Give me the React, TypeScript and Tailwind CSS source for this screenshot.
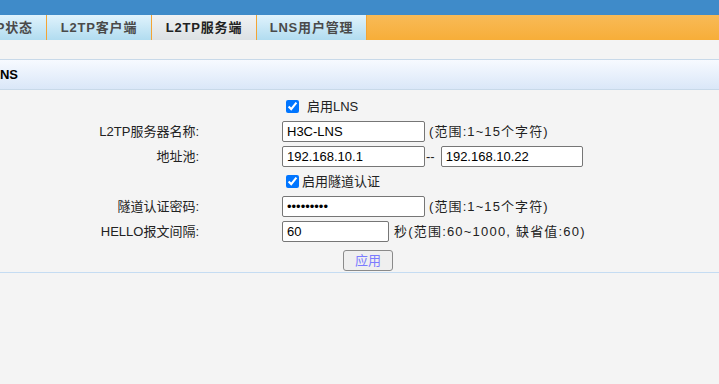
import React from 'react';

const font = { fontFamily: '"Liberation Sans", "Noto Sans CJK SC", sans-serif' };

const tabs = [
  { label: 'L2TP状态', cls: '-ml-[43px] w-[90px]' },
  { label: 'L2TP客户端', cls: 'w-[105px]' },
  { label: 'L2TP服务端', cls: 'w-[105px]', active: true },
  { label: 'LNS用户管理', cls: 'w-[110px]' },
];

const Field = ({ label, children }: { label?: string; children: React.ReactNode }) => (
  <div className="flex h-[25px] items-center">
    <div className="w-[199px] shrink-0 text-right text-[13px] text-[#222]">{label}</div>
    <div className="ml-[83px] flex items-center text-[13px] text-[#222]">{children}</div>
  </div>
);

const inputCls =
  'h-[21px] rounded-[2px] border border-[#767676] bg-white pl-[4px] text-[13px] text-black outline-none';

export default function App() {
  return (
    <div className="h-[384px] w-[719px] overflow-hidden bg-[#f4f4f4]" style={font}>
      {/* top bar */}
      <div className="h-[15px] bg-[#3f8bc9]" />

      {/* tabs */}
      <div className="flex h-[25px] bg-gradient-to-b from-[#f8ba56] to-[#f7ae38]">
        {tabs.map((t) => (
          <div
            key={t.label}
            className={`flex shrink-0 items-center justify-center border-r border-[#f3a434] text-[13px] font-bold tracking-[0.8px] ${t.cls} ${
              t.active
                ? 'bg-gradient-to-b from-[#f1f2f3] to-[#dce1e4] text-[#222]'
                : 'bg-gradient-to-b from-[#e0f3fc] to-[#b1dcf0] text-[#4a4a4a]'
            }`}
          >
            {t.label}
          </div>
        ))}
      </div>

      <div className="h-[19px]" />

      {/* section header */}
      <div className="flex h-[31px] items-center border-y border-[#c8d9e9] bg-gradient-to-b from-[#f7faff] to-[#dae7f8]">
        <span className="-ml-[8px] text-[13px] font-bold text-black">LNS</span>
      </div>

      {/* form */}
      <div className="border-b border-[#c5dcf2] pt-[4px]">
        <Field>
          <input type="checkbox" defaultChecked className="my-0 ml-[4px] mr-[8px] h-[13px] w-[13px] accent-[#0075ff]" />
          <span>启用LNS</span>
        </Field>
        <Field label="L2TP服务器名称:">
          <input className={`${inputCls} w-[143px]`} defaultValue="H3C-LNS" />
          <span className="ml-[4px] tracking-[1.1px]">(范围:1~15个字符)</span>
        </Field>
        <Field label="地址池:">
          <input className={`${inputCls} w-[143px]`} defaultValue="192.168.10.1" />
          <span className="ml-[1px] mr-[6px]">--</span>
          <input className={`${inputCls} w-[142px]`} defaultValue="192.168.10.22" />
        </Field>
        <Field>
          <input type="checkbox" defaultChecked className="my-0 ml-[4px] mr-[3px] h-[13px] w-[13px] accent-[#0075ff]" />
          <span>启用隧道认证</span>
        </Field>
        <Field label="隧道认证密码:">
          <input type="password" className={`${inputCls} w-[143px]`} defaultValue="123456789" />
          <span className="ml-[4px] tracking-[1.1px]">(范围:1~15个字符)</span>
        </Field>
        <Field label="HELLO报文间隔:">
          <input className={`${inputCls} w-[107px]`} defaultValue="60" />
          <span className="ml-[5px] tracking-[1.2px]">秒(范围:60~1000, 缺省值:60)</span>
        </Field>
        <div className="mb-[1px] mt-[6px] flex">
          <button
            type="button"
            className="ml-[343px] h-[21px] w-[50px] rounded-[3px] border border-[#8a8a8a] bg-[#efefef] text-[13px] text-[#7b7bff]"
          >
            应用
          </button>
        </div>
      </div>
    </div>
  );
}
